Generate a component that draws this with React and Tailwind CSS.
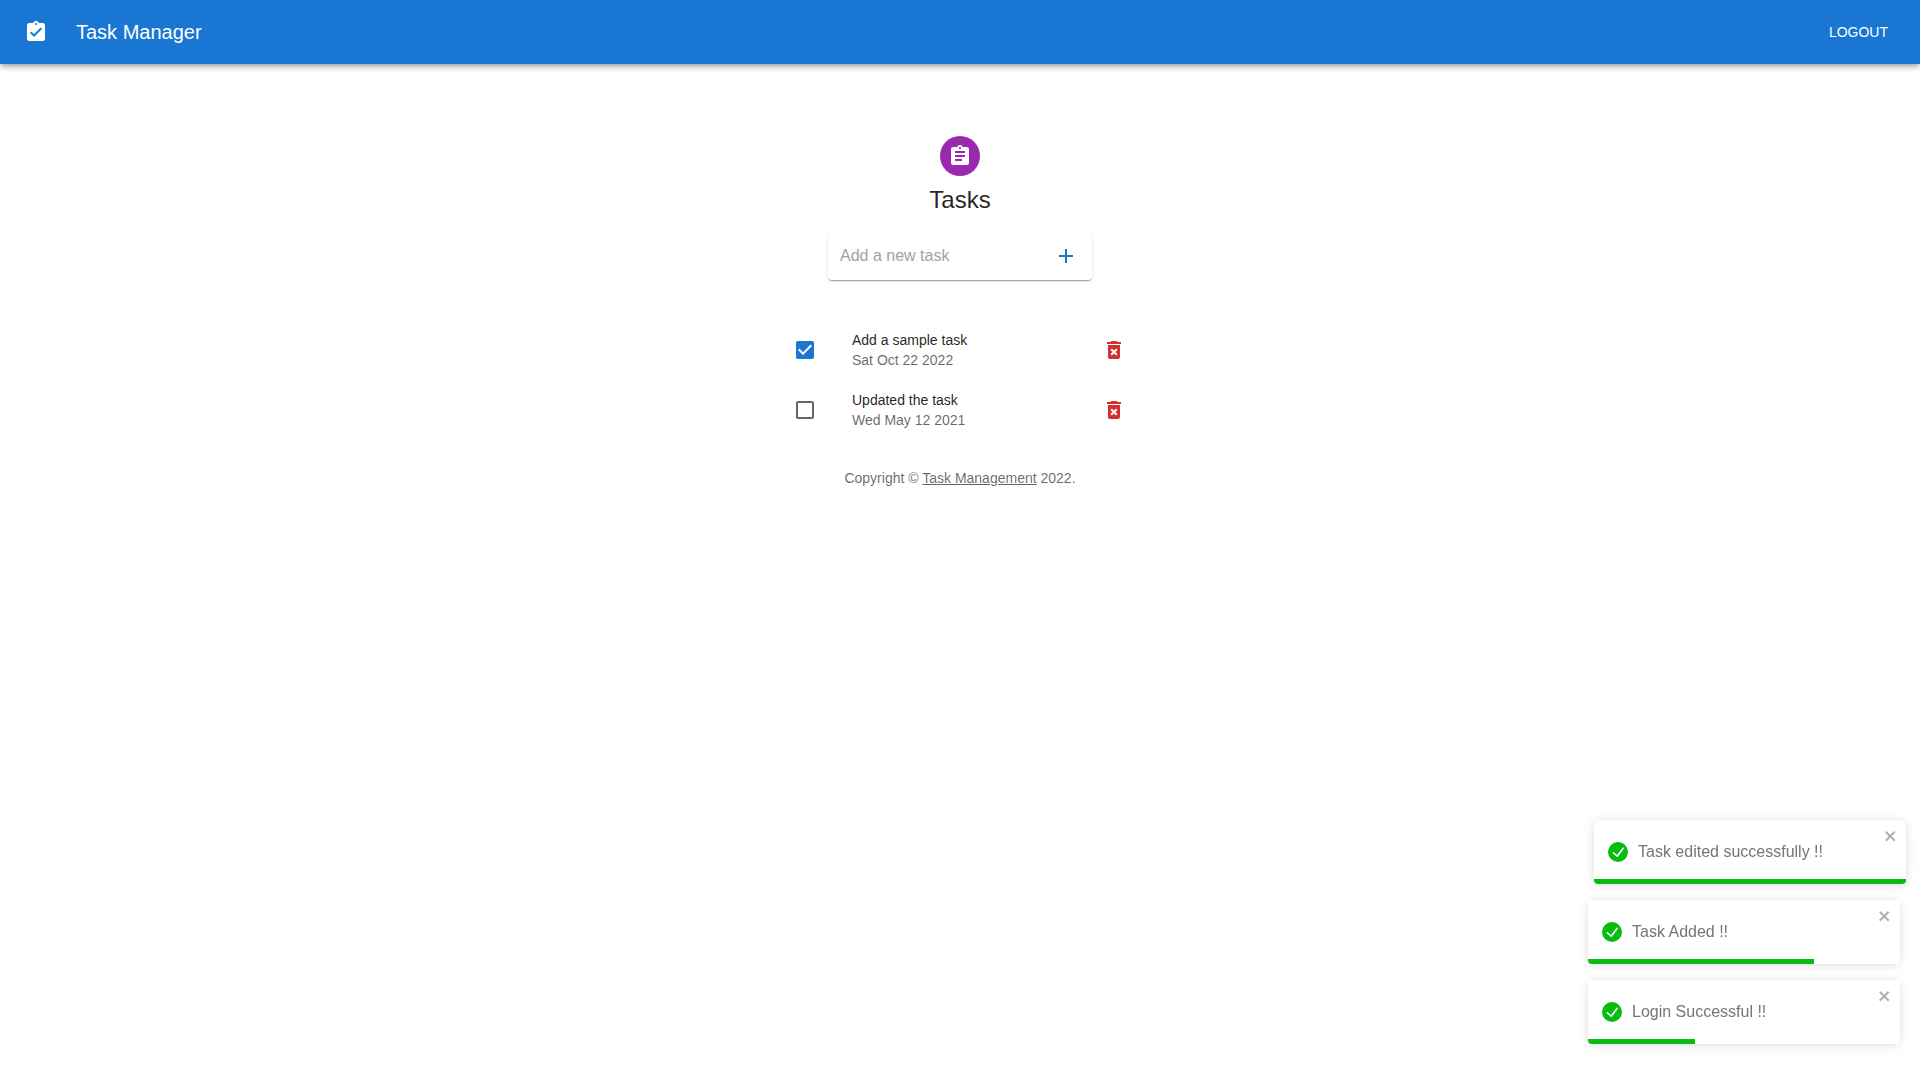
import { useState } from "react";
import {
  MdAdd,
  MdAssignment,
  MdAssignmentTurnedIn,
  MdCheckBox,
  MdCheckBoxOutlineBlank,
  MdDeleteForever,
} from "react-icons/md";

const initialTasks = [
  { id: 1, title: "Add a sample task", date: "Sat Oct 22 2022", done: true },
  { id: 2, title: "Updated the task", date: "Wed May 12 2021", done: false },
];

const toasts = [
  { id: 1, text: "Task edited successfully !!", progress: 100, entering: true },
  { id: 2, text: "Task Added !!", progress: 72.4, entering: false },
  { id: 3, text: "Login Successful !!", progress: 34.3, entering: false },
];

function Header() {
  return (
    <header className="flex h-16 items-center bg-[#1976d2] px-6 text-white shadow-[0_2px_4px_-1px_rgba(0,0,0,0.2),0_4px_5px_0_rgba(0,0,0,0.14),0_1px_10px_0_rgba(0,0,0,0.12)]">
      <button type="button" aria-label="Home" className="-ml-3 mr-4 p-3">
        <MdAssignmentTurnedIn className="size-6" />
      </button>
      <span className="grow text-xl leading-8">Task Manager</span>
      <button type="button" className="px-2 py-1.5 text-sm leading-6 uppercase">
        Logout
      </button>
    </header>
  );
}

function AddTask() {
  return (
    <form
      onSubmit={(e) => e.preventDefault()}
      className="mt-4 flex w-66 items-center rounded bg-white px-1 py-0.5 shadow-[0_2px_1px_-1px_rgba(0,0,0,0.2),0_1px_1px_0_rgba(0,0,0,0.14),0_1px_3px_0_rgba(0,0,0,0.12)]"
    >
      <input
        type="text"
        aria-label="Add a new task"
        placeholder="Add a new task"
        className="ml-2 min-w-0 grow text-base leading-6 text-black/87 outline-none placeholder:text-[#a2a2a2]"
      />
      <button type="submit" aria-label="Add" className="p-2.5 text-[#1976d2]">
        <MdAdd className="size-6" />
      </button>
    </form>
  );
}

function TaskRow({ task, onToggle, onDelete }) {
  const id = `task-${task.id}`;
  return (
    <li className="flex items-center py-2.5 pr-3.5 pl-[13px]">
      <span className="grid w-[59px] shrink-0">
        <input
          id={id}
          type="checkbox"
          checked={task.done}
          onChange={onToggle}
          className="col-start-1 row-start-1 size-6 cursor-pointer appearance-none"
        />
        {task.done ? (
          <MdCheckBox className="pointer-events-none col-start-1 row-start-1 size-6 text-[#1976d2]" />
        ) : (
          <MdCheckBoxOutlineBlank className="pointer-events-none col-start-1 row-start-1 size-6 text-black/60" />
        )}
      </span>
      <label htmlFor={id} className="grow text-sm leading-5">
        <span className="block text-black/87">{task.title}</span>
        <span className="block text-black/60">{task.date}</span>
      </label>
      <button
        type="button"
        aria-label={`Delete ${task.title}`}
        onClick={onDelete}
        className="text-[#d32f2f]"
      >
        <MdDeleteForever className="size-6" />
      </button>
    </li>
  );
}

function Toast({ toast, onClose }) {
  return (
    <div
      role="alert"
      className={
        "flex h-16 flex-col overflow-hidden rounded bg-white shadow-[0_1px_10px_0_rgba(0,0,0,0.1),0_2px_15px_0_rgba(0,0,0,0.05)] " +
        (toast.entering ? "translate-x-1.5" : "")
      }
    >
      <div className="flex grow items-start pt-2 pr-2 pl-3.5">
        <div className="mt-3 flex grow items-center gap-2.5">
          <svg viewBox="0 0 24 24" className="size-5 shrink-0 fill-[#07bc0c]" aria-hidden="true">
            <path d="M12 0a12 12 0 1012 12A12.014 12.014 0 0012 0zm6.927 8.2l-6.845 9.289a1.011 1.011 0 01-1.43.188l-4.888-3.908a1 1 0 111.25-1.562l4.076 3.261 6.227-8.451a1 1 0 111.61 1.183z" />
          </svg>
          <p className="text-base leading-6 text-[#757575]">{toast.text}</p>
        </div>
        <button type="button" aria-label="close" onClick={onClose} className="opacity-30">
          <svg viewBox="0 0 14 16" className="h-4 w-3.5 fill-black" aria-hidden="true">
            <path
              fillRule="evenodd"
              d="M7.71 8.23l3.75 3.75-1.48 1.48-3.75-3.75-3.75 3.75L1 11.98l3.75-3.75L1 4.48 2.48 3l3.75 3.75L9.98 3l1.48 1.48-3.75 3.75z"
            />
          </svg>
        </button>
      </div>
      <div className="h-[5px] bg-[#07bc0c]" style={{ width: `${toast.progress}%` }} />
    </div>
  );
}

export default function App() {
  const [tasks, setTasks] = useState(initialTasks);
  const [visible, setVisible] = useState(toasts);

  const toggle = (id) =>
    setTasks((list) => list.map((t) => (t.id === id ? { ...t, done: !t.done } : t)));
  const remove = (id) => setTasks((list) => list.filter((t) => t.id !== id));
  const close = (id) => setVisible((list) => list.filter((t) => t.id !== id));

  return (
    <div className="font-['Liberation_Sans',Arial,sans-serif] text-black/87">
      <Header />
      <main className="mx-auto flex max-w-md flex-col items-center px-6 pt-18">
        <div className="grid size-10 place-items-center rounded-full bg-[#9c27b0] text-white">
          <MdAssignment className="size-6" />
        </div>
        <h1 className="mt-2 text-2xl leading-8">Tasks</h1>
        <AddTask />
        <ul className="mt-10 w-full max-w-90">
          {tasks.map((task) => (
            <TaskRow
              key={task.id}
              task={task}
              onToggle={() => toggle(task.id)}
              onDelete={() => remove(task.id)}
            />
          ))}
        </ul>
        <footer className="mt-7 text-center text-sm leading-5 text-black/60">
          Copyright ©{" "}
          <a href="#" className="underline decoration-black/60">
            Task Management
          </a>{" "}
          2022.
        </footer>
      </main>
      <div className="fixed right-5 bottom-9 flex w-78 flex-col gap-4">
        {visible.map((toast) => (
          <Toast key={toast.id} toast={toast} onClose={() => close(toast.id)} />
        ))}
      </div>
    </div>
  );
}
